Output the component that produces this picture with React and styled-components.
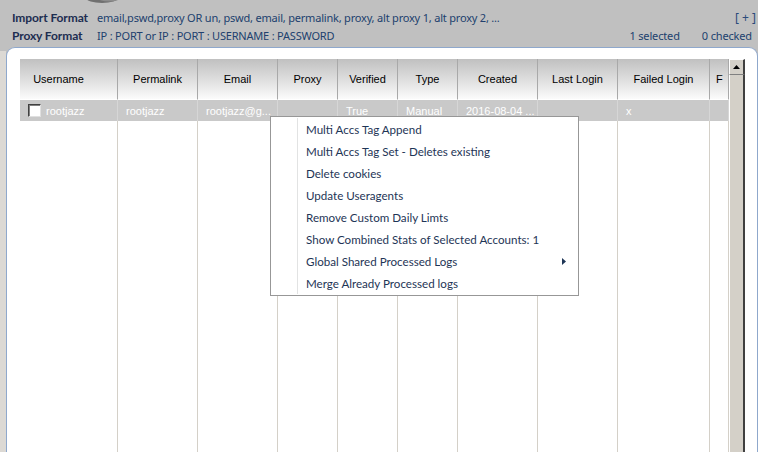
import styled, { createGlobalStyle } from "styled-components";

const GlobalStyle = createGlobalStyle`
  html, body {
    margin: 0;
    padding: 0;
    background: #c0c0c0;
    overflow: hidden;
  }
  * { box-sizing: border-box; }
`;

const columns = [
  { title: "Username", width: 98, pad: 20 },
  { title: "Permalink", width: 80 },
  { title: "Email", width: 80 },
  { title: "Proxy", width: 60 },
  { title: "Verified", width: 60 },
  { title: "Type", width: 60 },
  { title: "Created", width: 80 },
  { title: "Last Login", width: 80 },
  { title: "Failed Login", width: 92 },
  { title: "F", width: 19, left: true },
];

const row = ["rootjazz", "rootjazz", "rootjazz@g...", "", "True", "Manual", "2016-08-04 ...", "", "x", ""];

const menuItems = [
  "Multi Accs Tag Append",
  "Multi Accs Tag Set - Deletes existing",
  "Delete cookies",
  "Update Useragents",
  "Remove Custom Daily Limts",
  "Show Combined Stats of Selected Accounts: 1",
  "Global Shared Processed Logs",
  "Merge Already Processed logs",
];

export default function App() {
  return (
    <Page>
      <GlobalStyle />
      <Logo width="40" height="4" viewBox="0 0 40 4">
        <ellipse cx="18" cy="-2" rx="16" ry="5" fill="#707070" />
        <ellipse cx="25" cy="-2" rx="11" ry="3.5" fill="#8c8c8c" />
      </Logo>
      <TopBar>
        <Label>Import Format</Label>
        <Value>email,pswd,proxy OR un, pswd, email, permalink, proxy, alt proxy 1, alt proxy 2, ...</Value>
        <Expand>[ + ]</Expand>
        <Label>Proxy Format</Label>
        <Value>IP : PORT or IP : PORT : USERNAME : PASSWORD</Value>
        <Counts>
          <span>1 selected</span>
          <span>0 checked</span>
        </Counts>
      </TopBar>
      <Body>
        <Strip />
        <Panel>
          <GridArea>
            <Grid>
              {columns.map((c) => (
                <HeadCell key={c.title} $pad={c.pad} $left={c.left}>{c.title}</HeadCell>
              ))}
              {row.map((v, i) => (
                <RowCell key={i}>
                  {i === 0 && <Check />}
                  {v}
                </RowCell>
              ))}
              {columns.map((c) => (
                <FillCell key={c.title} />
              ))}
            </Grid>
            <Scrollbar>
              <ScrollButton>
                <svg width="7" height="4" viewBox="0 0 7 4">
                  <path d="M3.5 0 L7 4 L0 4 Z" fill="#000" />
                </svg>
              </ScrollButton>
              <Thumb />
            </Scrollbar>
          </GridArea>
          <Menu>
            {menuItems.map((m) => (
              <MenuItem key={m}>
                <span>{m}</span>
                {m.startsWith("Global") && (
                  <svg width="4" height="7" viewBox="0 0 4 7">
                    <path d="M0 0 L4 3.5 L0 7 Z" fill="#1e3556" />
                  </svg>
                )}
              </MenuItem>
            ))}
          </Menu>
        </Panel>
      </Body>
    </Page>
  );
}

const Page = styled.div`
  position: relative;
  width: 758px;
  height: 452px;
  overflow: hidden;
  background: #c0c0c0;
  display: flex;
  flex-direction: column;
`;

const Logo = styled.svg`
  position: absolute;
  left: 84px;
  top: 0;
`;

const TopBar = styled.div`
  display: grid;
  grid-template-columns: 85px minmax(0, 1fr) auto;
  grid-auto-rows: 18px;
  align-items: center;
  padding: 8px 2px 0 12px;
  height: 47px;
  font-family: "Noto Sans", sans-serif;
  font-size: 11px;
  color: #21406e;
`;

const Label = styled.div`
  font-family: "Lato", sans-serif;
  font-weight: 700;
  font-size: 12px;
  letter-spacing: -0.1px;
  color: #1d2d50;
  white-space: nowrap;
  overflow: hidden;
`;

const Value = styled.div`
  white-space: nowrap;
  letter-spacing: -0.2px;
`;

const Expand = styled.div`
  justify-self: end;
  font-size: 12px;
  color: #2a4a7a;
`;

const Counts = styled.div`
  display: flex;
  gap: 22px;
  padding-right: 4px;
  letter-spacing: -0.15px;
`;

const Body = styled.div`
  flex: 1;
  display: flex;
  min-height: 0;
`;

const Strip = styled.div`
  width: 6px;
  margin-top: 4px;
  background: #dcd9d4;
`;

const Panel = styled.div`
  position: relative;
  flex: 1;
  background: #fff;
  border: 1px solid #8fa8cc;
  border-bottom: none;
  border-radius: 9px 9px 0 0;
  padding: 11px 11px 0 13px;
  display: flex;
`;

const GridArea = styled.div`
  display: flex;
  flex: 1;
`;

const Grid = styled.div`
  display: grid;
  grid-template-columns: ${columns.map((c) => c.width + "px").join(" ")};
  grid-template-rows: 41px 21px 1fr;
  width: 709px;
  height: 400px;
  overflow: hidden;
  font-family: "Liberation Sans", Arial, sans-serif;
  font-size: 11px;
`;

const HeadCell = styled.div`
  display: flex;
  align-items: center;
  justify-content: ${(p) => (p.$left ? "flex-start" : "center")};
  padding-right: ${(p) => (p.$pad || 0)}px;
  padding-left: ${(p) => (p.$left ? 6 : 0)}px;
  background: linear-gradient(#c0c0c0, #fbfbfb);
  border-right: 1px solid #a9a9a9;
  border-bottom: 1px solid #fff;
  color: #000;
  white-space: nowrap;
  overflow: hidden;
  &:last-of-type { border-right: none; }
`;

const RowCell = styled.div`
  display: flex;
  align-items: center;
  gap: 5px;
  padding-left: 8px;
  background: #c9c9c9;
  border-right: 1px solid #d6d6d6;
  color: #fff;
  white-space: nowrap;
  overflow: hidden;
  &:first-of-type { padding-left: 7px; }
`;

const Check = styled.span`
  width: 13px;
  height: 13px;
  background: #fff;
  border-top: 1px solid #404040;
  border-left: 1px solid #404040;
  border-right: 1px solid #e0e0e0;
  border-bottom: 1px solid #e0e0e0;
  box-shadow: inset 1px 1px 0 #808080;
  flex: none;
`;

const FillCell = styled.div`
  border-right: 1px solid #d4d0c8;
`;

const Scrollbar = styled.div`
  width: 16px;
  display: flex;
  flex-direction: column;
  background: #d4d0c8;
`;

const ScrollButton = styled.div`
  height: 16px;
  display: flex;
  align-items: center;
  justify-content: center;
  background: #d4d0c8;
  border-top: 1px solid #fff;
  border-left: 1px solid #fff;
  border-right: 2px solid #404040;
  border-bottom: 1px solid #808080;
`;

const Thumb = styled.div`
  flex: 1;
  background: #d4d0c8;
  border-left: 1px solid #fff;
  border-right: 2px solid #404040;
`;

const Menu = styled.div`
  position: absolute;
  left: 263px;
  top: 68px;
  width: 309px;
  padding: 1px 0;
  background: #fff;
  border: 1px solid #979797;
  font-family: "Lato", sans-serif;
  font-size: 11.6px;
  color: #1e3556;
  &::before {
    content: "";
    position: absolute;
    left: 26px;
    top: 1px;
    bottom: 1px;
    width: 1px;
    background: #e2e3e3;
  }
`;

const MenuItem = styled.div`
  height: 22px;
  display: flex;
  align-items: center;
  justify-content: space-between;
  padding: 0 12px 0 35px;
  white-space: nowrap;
`;
